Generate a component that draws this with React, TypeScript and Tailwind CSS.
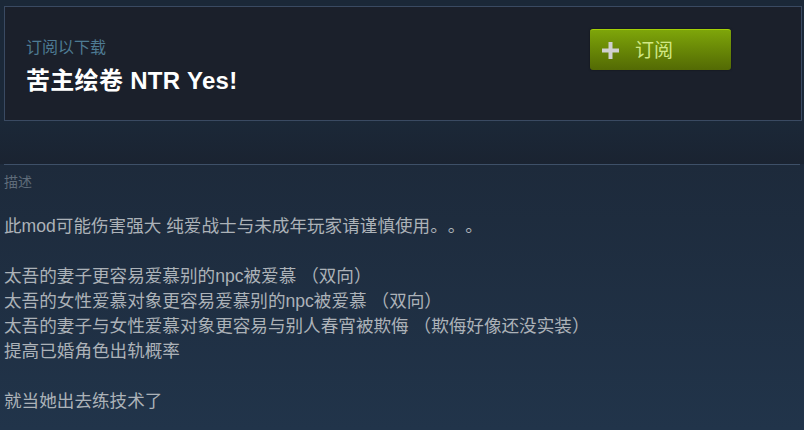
import React from "react";

const lines: string[] = [
  "此mod可能伤害强大 纯爱战士与未成年玩家请谨慎使用。。。",
  "",
  "太吾的妻子更容易爱慕别的npc被爱慕 （双向）",
  "太吾的女性爱慕对象更容易爱慕别的npc被爱慕 （双向）",
  "太吾的妻子与女性爱慕对象更容易与别人春宵被欺侮 （欺侮好像还没实装）",
  "提高已婚角色出轨概率",
  "",
  "就当她出去练技术了",
];

function SubscribeButton() {
  return (
    <button className="flex items-center w-[141px] h-[41px] rounded-[3px] border-t border-[#a4d007] bg-gradient-to-b from-[#7ea50a] to-[#536a04] pl-[12px] shadow-[0_0_2px_rgba(0,0,0,0.5)]">
      <svg width="17" height="17" viewBox="0 0 17 17" className="shrink-0">
        <rect x="6.5" y="0" width="4" height="17" fill="#d0d0d0" />
        <rect x="0" y="6.5" width="17" height="4" fill="#d0d0d0" />
      </svg>
      <span className="ml-[16px] text-[19px] leading-none text-[#d2e885]">订阅</span>
    </button>
  );
}

export default function App() {
  return (
    <div
      className="w-[804px] h-[430px] overflow-hidden bg-[#1b2838] pl-[4px] pr-[2px] pt-[6px]"
      style={{ fontFamily: '"Liberation Sans", Arial, "Noto Sans CJK SC", sans-serif' }}
    >
      <div className="flex justify-between border border-[#3a4a62] bg-[#1b202b] h-[115px] pl-[21px] pr-[70px]">
        <div className="pt-[31px]">
          <p className="text-[16px] leading-[20px] text-[#4e7b93]">订阅以下载</p>
          <h1 className="mt-[8px] text-[24px] leading-[30px] font-bold text-white tracking-[0.3px]">苦主绘卷 NTR Yes!</h1>
        </div>
        <div className="pt-[22px]">
          <SubscribeButton />
        </div>
      </div>

      <div className="h-[43px] bg-gradient-to-b from-[#1b2838] to-[#1a2331] -ml-[4px] -mr-[2px]" />

      <div className="-ml-[4px] -mr-[2px] pl-[4px] pr-[4px] h-[266px] bg-gradient-to-b from-[#1d2a3b] to-[#21344a]">
        <div className="h-px bg-[#3e5068]" />
        <p className="mt-[7px] text-[14px] leading-[20px] text-[#5f6c7a]">描述</p>
        <div className="mt-[22px] text-[17.6px] leading-[25px] text-[#acb2b8] [text-spacing-trim:space-all]">
          {lines.map((l, i) => (
            <div key={i} className="h-[25px] whitespace-pre">
              {l}
            </div>
          ))}
        </div>
      </div>
    </div>
  );
}
